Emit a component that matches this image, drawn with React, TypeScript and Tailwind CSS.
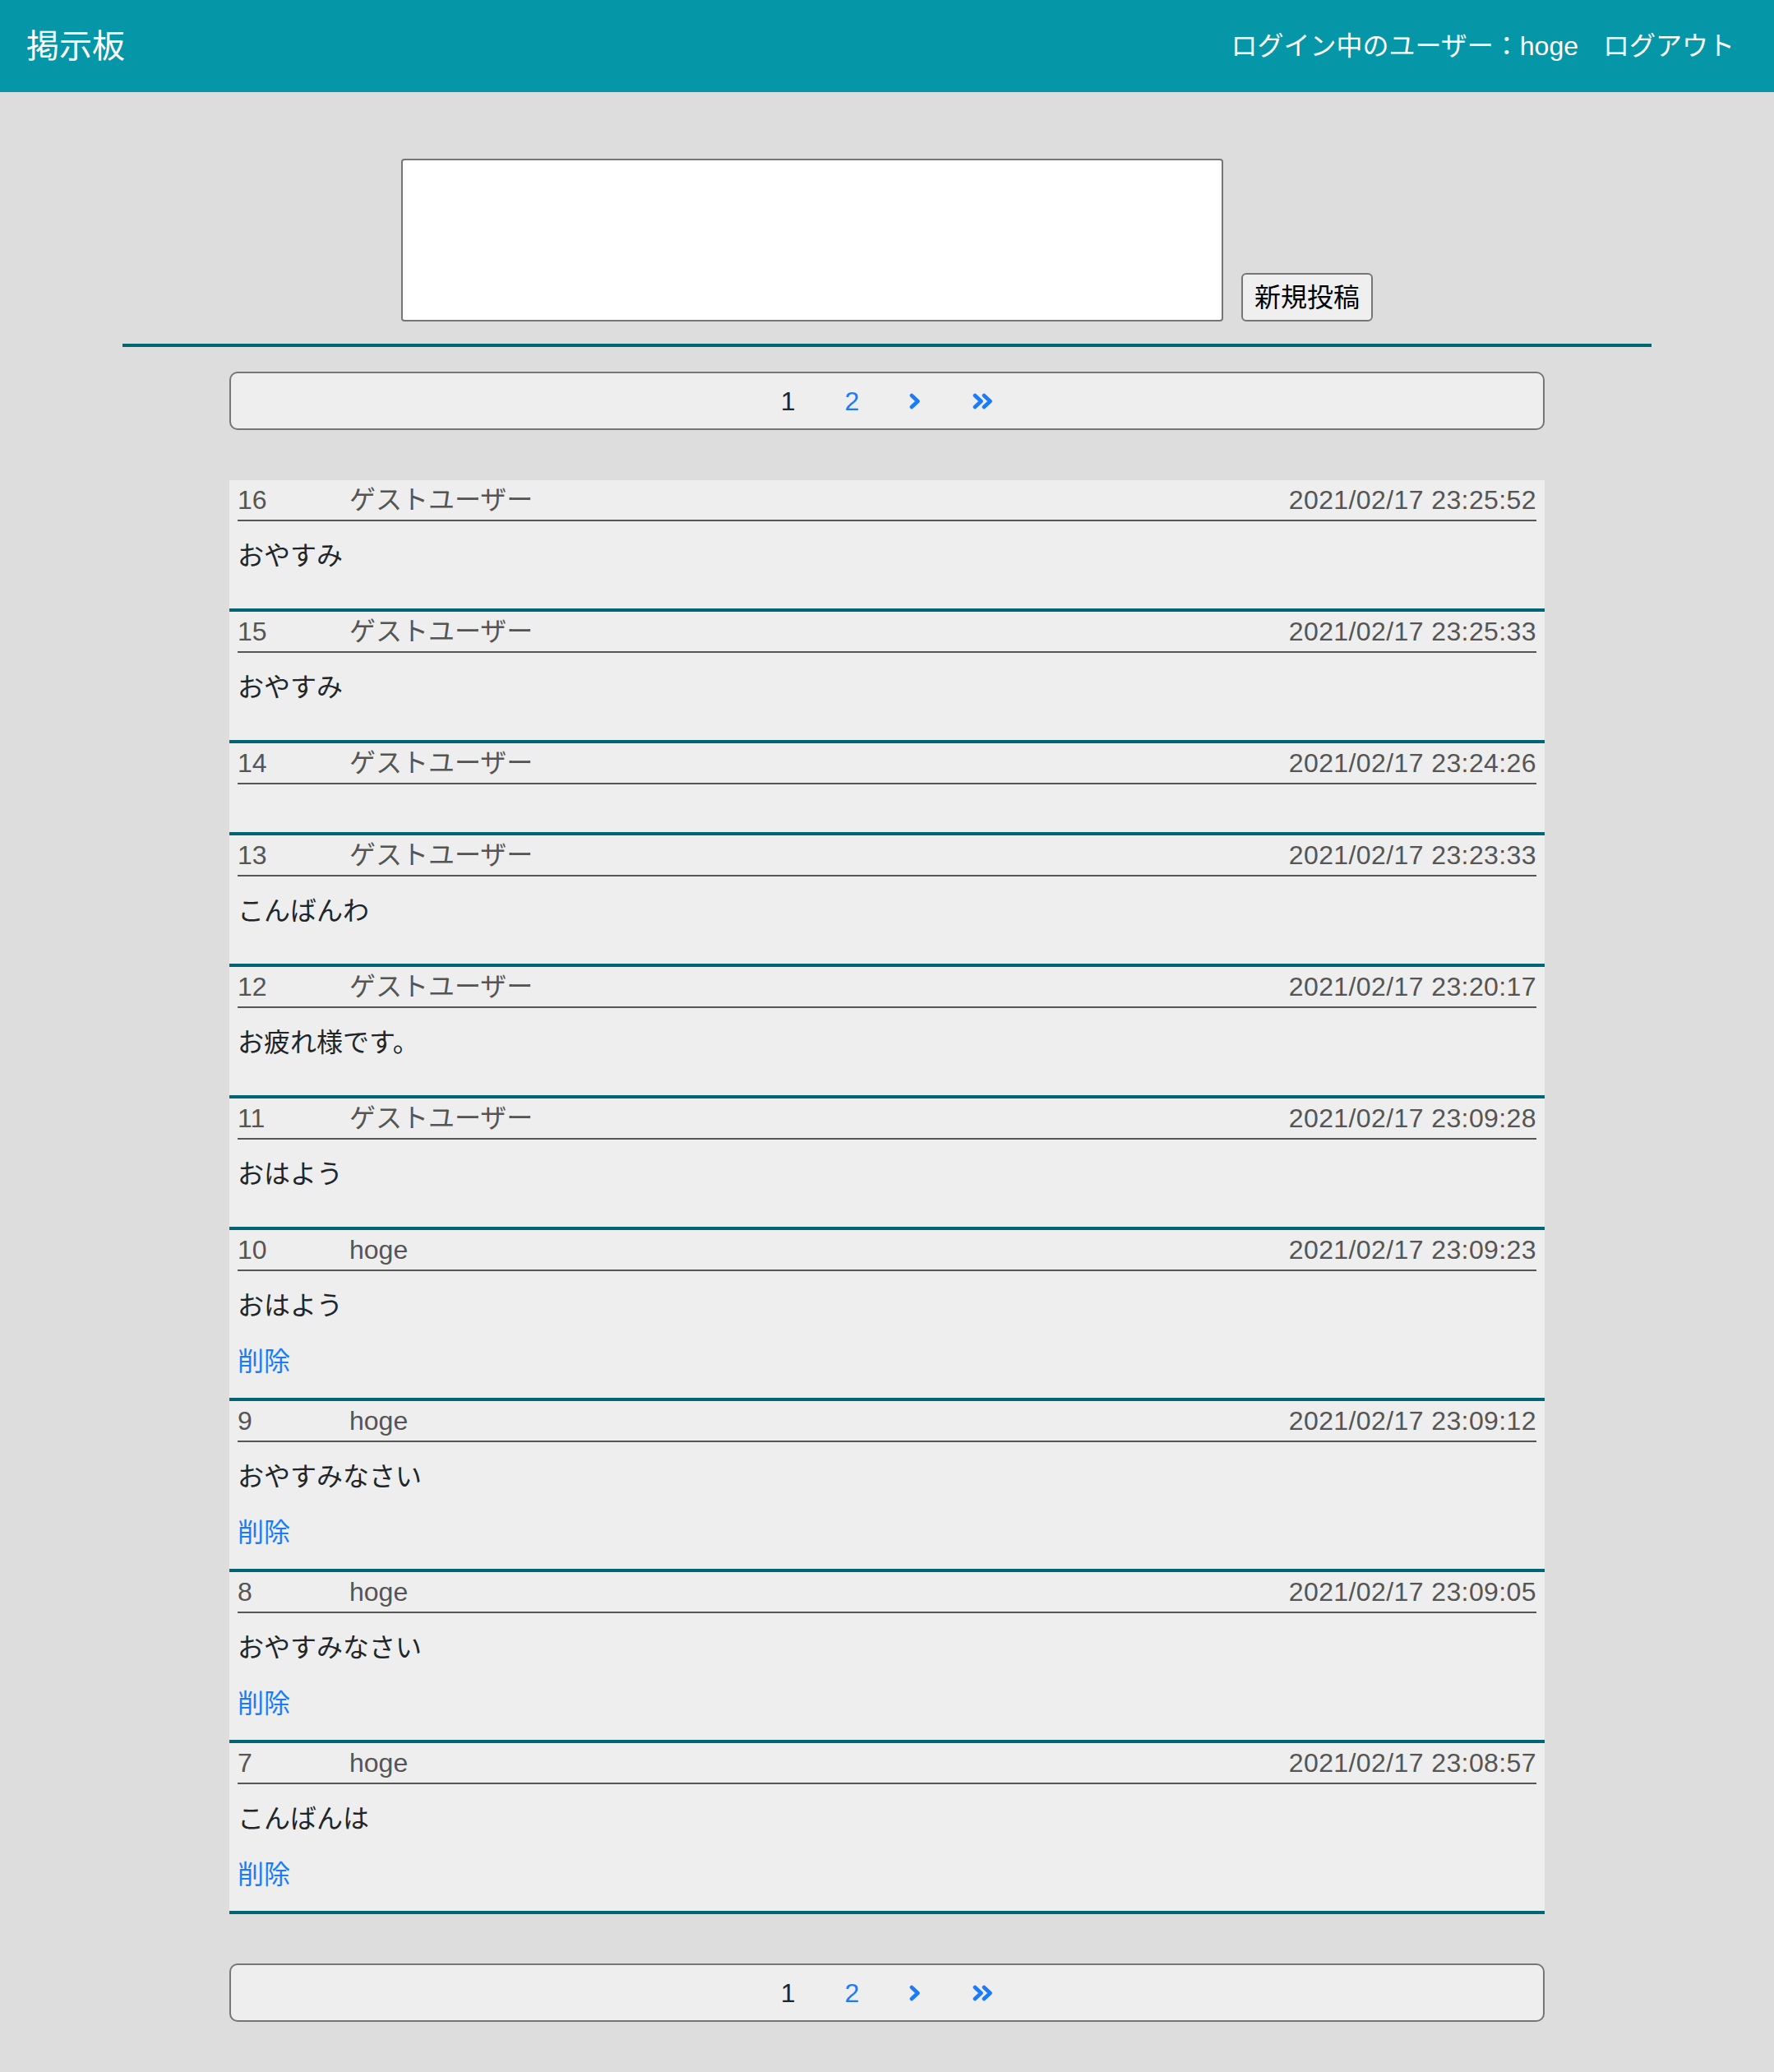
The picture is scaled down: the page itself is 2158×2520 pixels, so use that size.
import React from 'react';

interface Post {
  id: number;
  user: string;
  date: string;
  body: string;
  own: boolean;
}

const posts: Post[] = [
  { id: 16, user: 'ゲストユーザー', date: '2021/02/17 23:25:52', body: 'おやすみ', own: false },
  { id: 15, user: 'ゲストユーザー', date: '2021/02/17 23:25:33', body: 'おやすみ', own: false },
  { id: 14, user: 'ゲストユーザー', date: '2021/02/17 23:24:26', body: '', own: false },
  { id: 13, user: 'ゲストユーザー', date: '2021/02/17 23:23:33', body: 'こんばんわ', own: false },
  { id: 12, user: 'ゲストユーザー', date: '2021/02/17 23:20:17', body: 'お疲れ様です。', own: false },
  { id: 11, user: 'ゲストユーザー', date: '2021/02/17 23:09:28', body: 'おはよう', own: false },
  { id: 10, user: 'hoge', date: '2021/02/17 23:09:23', body: 'おはよう', own: true },
  { id: 9, user: 'hoge', date: '2021/02/17 23:09:12', body: 'おやすみなさい', own: true },
  { id: 8, user: 'hoge', date: '2021/02/17 23:09:05', body: 'おやすみなさい', own: true },
  { id: 7, user: 'hoge', date: '2021/02/17 23:08:57', body: 'こんばんは', own: true },
];

const font = { fontFamily: '"Liberation Sans", "Noto Sans CJK JP", sans-serif' };

const Chevron: React.FC = () => (
  <svg width="14" height="20" viewBox="0 0 14 20" className="block">
    <polyline
      points="3,3 10.5,10 3,17"
      fill="none"
      stroke="#1a7cf8"
      strokeWidth="4.6"
      strokeLinecap="round"
      strokeLinejoin="round"
    />
  </svg>
);

const DoubleChevron: React.FC = () => (
  <svg width="25" height="20" viewBox="0 0 25 20" className="block">
    <polyline
      points="3,3 10.5,10 3,17"
      fill="none"
      stroke="#1a7cf8"
      strokeWidth="4.6"
      strokeLinecap="round"
      strokeLinejoin="round"
    />
    <polyline
      points="14,3 21.5,10 14,17"
      fill="none"
      stroke="#1a7cf8"
      strokeWidth="4.6"
      strokeLinecap="round"
      strokeLinejoin="round"
    />
  </svg>
);

const Pager: React.FC = () => (
  <div className="mx-auto flex h-[71px] w-[1600px] items-center justify-center rounded-[10px] border-2 border-[#767676] bg-[#eeeeee] text-[32px] leading-[48px]">
    <span className="text-[#212529]">1</span>
    <a href="#" className="ml-[60px] text-[#1a7cf8]">2</a>
    <a href="#" className="ml-[61px]">
      <Chevron />
    </a>
    <a href="#" className="ml-[63px]">
      <DoubleChevron />
    </a>
  </div>
);

const PostItem: React.FC<{ post: Post }> = ({ post }) => (
  <div className="border-b-4 border-[#016671] px-[10px]">
    <div className="flex h-[50px] border-b-2 border-[#555555] text-[32px] leading-[48px] text-[#555555]">
      <span className="w-[136px]">{post.id}</span>
      <span>{post.user}</span>
      <span className="ml-auto tracking-[0.4px]">{post.date}</span>
    </div>
    <div className="pb-[20px] pt-[18px] text-[32px] leading-[48px] text-[#212529]">{post.body}</div>
    <div className="pb-[20px] text-[32px] leading-[48px]">
      {post.own && (
        <a href="#" className="text-[#1a7cf8]">
          削除
        </a>
      )}
    </div>
  </div>
);

const App: React.FC = () => {
  return (
    <div className="min-h-screen bg-[#dddddd]" style={font}>
      <header className="flex h-[112px] items-center bg-[#0596a8] pl-[32px] pr-[48px] text-white">
        <h1 className="text-[40px] leading-[48px]">掲示板</h1>
        <div className="ml-auto flex items-center gap-[30px] text-[32px] leading-[48px]">
          <span>ログイン中のユーザー：hoge</span>
          <a href="#">ログアウト</a>
        </div>
      </header>

      <div className="mt-[81px] flex items-end justify-center gap-[22px]">
        <textarea className="h-[198px] w-[1000px] resize-none rounded-[4px] border-2 border-[#767676] bg-white" />
        <button className="h-[59px] w-[160px] rounded-[6px] border-2 border-[#767676] bg-[#efefef] text-[32px] leading-[48px] text-black">
          新規投稿
        </button>
      </div>

      <div className="mx-auto mt-[27px] h-[4px] w-[1860px] bg-[#016671]" />

      <div className="mt-[30px]">
        <Pager />
      </div>

      <div className="mx-auto mt-[61px] w-[1600px] bg-[#eeeeee]">
        {posts.map((post) => (
          <PostItem key={post.id} post={post} />
        ))}
      </div>

      <div className="mt-[60px] pb-[61px]">
        <Pager />
      </div>
    </div>
  );
};

export default App;
